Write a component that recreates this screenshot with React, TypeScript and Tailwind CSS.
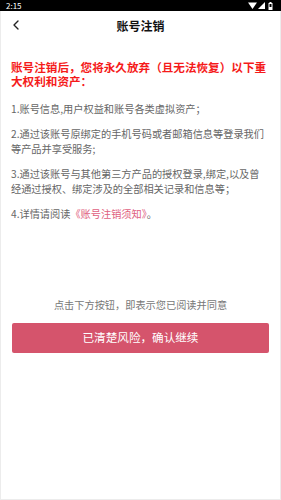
import { ChevronLeft } from 'lucide-react';

const ITEMS = [
  '1.账号信息,用户权益和账号各类虚拟资产；',
  '2.通过该账号原绑定的手机号码或者邮箱信息等登录我们等产品并享受服务;',
  '3.通过该账号与其他第三方产品的授权登录,绑定,以及曾经通过授权、绑定涉及的全部相关记录和信息等；',
];

function StatusBar() {
  return (
    <div className="h-[11px] bg-black flex items-center justify-between pl-[6px] pr-[8px]">
      <span className="text-[8px] leading-none text-white">2:15</span>
      <div className="flex items-center gap-[1px]">
        <svg width="9" height="7" viewBox="0 0 9 7">
          <path d="M0 0.5 H9 L4.5 7 Z" fill="#fff" />
        </svg>
        <svg width="7" height="7" viewBox="0 0 7 7">
          <path d="M7 0 V7 H0 Z" fill="#fff" />
        </svg>
        <svg width="5" height="8" viewBox="0 0 5 8" className="ml-[2px]">
          <rect x="0.5" y="1" width="4" height="7" fill="#fff" />
          <rect x="1.5" y="0" width="2" height="1" fill="#fff" />
          <rect x="1.5" y="2" width="2" height="3" fill="#000" />
        </svg>
      </div>
    </div>
  );
}

export default function App() {
  return (
    <div
      className="w-[281px] h-[500px] bg-white flex flex-col overflow-hidden"
      style={{ fontFamily: '"Noto Sans CJK SC", "Noto Sans", sans-serif' }}
    >
      <StatusBar />
      <div className="flex-1 flex flex-col border-x border-b border-[#ececec]">
        <div className="relative h-[26px] pt-[3px] flex items-center justify-center">
          <ChevronLeft className="absolute left-[7px] top-[6px] w-[16px] h-[16px] text-[#222]" strokeWidth={2} />
          <h1 className="text-[12px] font-bold text-[#111]">账号注销</h1>
        </div>

        <div className="pl-[10px] pr-[12px] pt-[23px]">
          <h2 className="text-[11.6px] leading-[14px] font-bold text-[#f51a1a]">
            账号注销后，您将永久放弃（且无法恢复）以下重大权利和资产：
          </h2>

          <div className="mt-[13px] flex flex-col gap-[10px] text-[10.2px] leading-[15px] text-[#666]">
            {ITEMS.map(t => (
              <p key={t}>{t}</p>
            ))}
            <p>
              4.详情请阅读<span className="text-[#e0607e]">《账号注销须知》</span>。
            </p>
          </div>
        </div>

        <div className="mt-[77px] px-[11px] flex flex-col items-center">
          <p className="text-[10.2px] leading-[14px] text-[#777]">点击下方按钮，即表示您已阅读并同意</p>
          <button className="mt-[11px] w-full h-[30px] rounded-[2px] bg-[#d5546c] text-white text-[11.6px]">
            已清楚风险，确认继续
          </button>
        </div>
      </div>
    </div>
  );
}
